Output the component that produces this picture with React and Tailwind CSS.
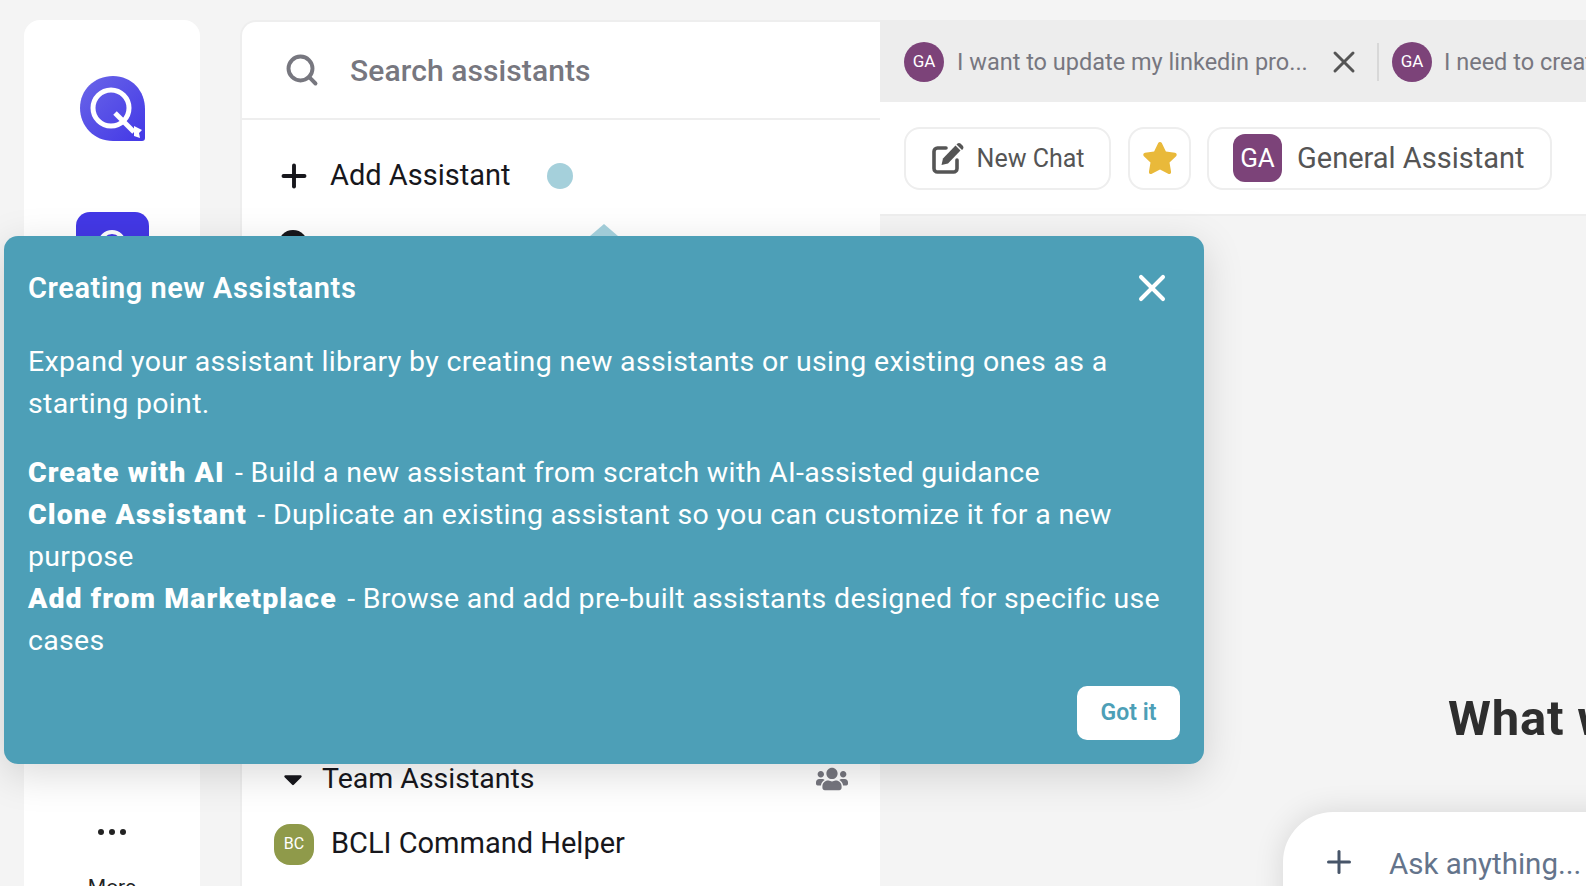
import React from 'react';
import { Plus, Search, X } from 'lucide-react';
import { FaCaretDown, FaStar, FaUsers } from 'react-icons/fa';

const Logo = () => (
  <svg width="66" height="66" viewBox="0 0 66 66">
    <defs>
      <linearGradient id="logoFill" x1="0" y1="0" x2="1" y2="1">
        <stop offset="0" stopColor="#6a66e8" />
        <stop offset="1" stopColor="#4338e6" />
      </linearGradient>
    </defs>
    <path d="M33 0C52 0 65 15 65 33V62Q65 65 62 65H33C14 65 0 50 0 32C0 14 14 0 33 0Z" fill="url(#logoFill)" />
    <circle cx="31" cy="32" r="18" fill="none" stroke="white" strokeWidth="5" />
    <path d="M35 37L54 56" stroke="white" strokeWidth="5" />
    <path d="M54 50L62 54L59 57L60 62L54 60Z" fill="white" />
  </svg>
);

const EditIcon = () => (
  <svg width="33" height="33" viewBox="0 0 33 33" className="shrink-0">
    <path d="M15 6H6.5A3.5 3.5 0 0 0 3 9.5V26.500A3.500 3.500 0 0 0 6.500 30H22.500A3.500 3.500 0 0 0 26 26.500V18" fill="none" stroke="currentColor" strokeWidth="3.600" strokeLinecap="round" />
    <path d="M24.500 3.500L29.500 8.500L17 21.500L10.500 23L12 16.500Z" fill="currentColor" />
    <path d="M26.500 1.500Q28 0.500 29.500 1.500L32 4Q33 5.500 32 7L31 8L25.500 2.500Z" fill="currentColor" />
  </svg>
);

const Avatar = ({ label, className }) => (
  <div className={`flex shrink-0 items-center justify-center text-white ${className}`}>{label}</div>
);

const Sidebar = () => (
  <aside className="ml-6 flex h-[900px] w-[176px] shrink-0 flex-col items-center rounded-2xl bg-white">
    <div className="mt-14 ml-[2px]"><Logo /></div>
    <div className="mt-[70px] flex h-[72px] w-[73px] justify-center rounded-[14px] bg-[#4338e6] pt-[18px]">
      <div className="h-7 w-7 rounded-full border-4 border-white" />
    </div>
    <div className="mt-[545px] flex gap-[5px]">
      <span className="h-[6px] w-[6px] rounded-full bg-[#222]" />
      <span className="h-[6px] w-[6px] rounded-full bg-[#222]" />
      <span className="h-[6px] w-[6px] rounded-full bg-[#222]" />
    </div>
    <div className="mt-[37px] text-[21px] text-[#222]">More</div>
  </aside>
);

const AssistantsPanel = () => (
  <section className="ml-[40px] w-[640px] shrink-0 rounded-tl-2xl border-2 border-b-0 border-r-0 border-[#eeeeee] bg-white">
    <div className="flex h-[98px] items-center border-b-2 border-[#eeeeee] pl-[42px]">
      <Search className="h-[36px] w-[36px] text-[#77777f]" strokeWidth={2.6} />
      <span className="ml-[30px] text-[30px] font-medium tracking-[0.1px] text-[#77777f]">Search assistants</span>
    </div>
    <div className="flex items-center pl-[34px] pt-[34px] text-[#17171c]">
      <Plus className="h-[36px] w-[36px]" strokeWidth={2.6} />
      <span className="ml-[18px] text-[29px]">Add Assistant</span>
      <span className="ml-[37px] h-[26px] w-[26px] rounded-full bg-[#a5d0db]" />
    </div>
    <div className="ml-[36px] mt-[32px] h-[36px] w-[30px] rounded-full bg-[#17171c]" />
    <div className="mt-[492px] flex items-center pl-[38px] pr-[32px] text-[#17171c]">
      <FaCaretDown className="h-[30px] w-[26px]" />
      <span className="ml-[16px] flex-1 text-[28.5px]">Team Assistants</span>
      <FaUsers className="h-[28px] w-[32px] text-[#77777f]" />
    </div>
    <div className="mt-[22px] flex items-center pl-[32px] text-[#17171c]">
      <Avatar label="BC" className="h-[41px] w-[40px] rounded-[16px] bg-[#8f9a4a] text-[16px]" />
      <span className="ml-[17px] text-[29px]">BCLI Command Helper</span>
    </div>
  </section>
);

const ChatPane = () => (
  <main className="min-w-0 flex-1 overflow-hidden">
    <div className="flex h-[82px] items-center whitespace-nowrap bg-[#ededed] pl-6 pt-[2px] text-[23.5px] text-[#777780]">
      <Avatar label="GA" className="h-10 w-10 rounded-full bg-[#7c4379] text-[17px]" />
      <span className="ml-[13px] w-[350px] shrink-0 pt-[2px]">I want to update my linkedin pro...</span>
      <X className="ml-[19px] h-[36px] w-[36px] shrink-0 text-[#555]" strokeWidth={2} />
      <span className="ml-[15px] h-[38px] w-[2px] shrink-0 bg-[#d8d8d8]" />
      <Avatar label="GA" className="ml-[13px] h-10 w-10 rounded-full bg-[#7c4379] text-[17px]" />
      <span className="ml-[12px] pt-[2px]">I need to create a</span>
    </div>
    <div className="flex h-[114px] items-center border-b-2 border-[#eeeeee] bg-white pl-6 text-[#555555]">
      <button className="flex h-[63px] w-[207px] shrink-0 items-center justify-center gap-[13px] rounded-2xl border-2 border-[#eeeeee] text-[25px]">
        <EditIcon />
        <span className="pt-[2px]">New Chat</span>
      </button>
      <button className="ml-[17px] flex h-[63px] w-[63px] shrink-0 items-center justify-center rounded-2xl border-2 border-[#eeeeee]">
        <FaStar className="h-[36px] w-[36px] text-[#e9b93a]" />
      </button>
      <button className="ml-[16px] flex h-[63px] w-[345px] shrink-0 items-center rounded-2xl border-2 border-[#eeeeee] pl-6 text-[29px]">
        <Avatar label="GA" className="h-[48px] w-[49px] rounded-xl bg-[#7c4379] text-[26px]" />
        <span className="ml-[15px] pt-[2px]">General Assistant</span>
      </button>
    </div>
    <h1 className="ml-[568px] mt-[475px] whitespace-nowrap text-[49px] font-bold leading-[56px] tracking-[0.8px] text-[#2e2e2e]">
      What would you like to do?
    </h1>
    <div className="ml-[403px] mt-[65px] flex h-[140px] w-[900px] items-start rounded-[50px] bg-white pl-[38px] pt-[32px] shadow-[0_0_30px_rgba(0,0,0,0.12)]">
      <Plus className="h-[36px] w-[36px] shrink-0 text-[#475569]" strokeWidth={2} />
      <span className="ml-[32px] text-[29.5px] leading-[40px] text-[#64748b]">Ask anything...</span>
    </div>
  </main>
);

const Popover = () => (
  <div className="absolute left-1 top-[236px] h-[528px] w-[1200px] rounded-[14px] bg-[#4d9fb7] px-6 text-[28.5px] leading-[42px] tracking-[0.33px] text-white shadow-[0_10px_40px_rgba(0,0,0,0.15)]">
    <div className="absolute left-[586px] top-[-12px] h-0 w-0 border-x-[14px] border-b-[12px] border-x-transparent border-b-[#a0cbd7]" />
    <div className="flex items-center justify-between pt-[30px]">
      <h2 className="text-[29px] font-semibold leading-[42px] tracking-[0.55px]">Creating new Assistants</h2>
      <X className="mr-[6px] h-[44px] w-[44px]" strokeWidth={2.2} />
    </div>
    <p className="mt-[31px]">
      Expand your assistant library by creating new assistants or using existing ones as a<br />
      starting point.
    </p>
    <p className="mt-[27px]">
      <b className="mr-[3px] font-black tracking-[1.05px]">Create with AI</b> - Build a new assistant from scratch with AI-assisted guidance<br />
      <b className="mr-[3px] font-black tracking-[1.05px]">Clone Assistant</b> - Duplicate an existing assistant so you can customize it for a new<br />
      purpose<br />
      <b className="mr-[3px] font-black tracking-[1.05px]">Add from Marketplace</b> - Browse and add pre-built assistants designed for specific use<br />
      cases
    </p>
    <div className="mt-[24px] flex justify-end">
      <button className="flex h-[54px] w-[103px] items-center justify-center rounded-[10px] bg-white text-[23px] font-semibold tracking-normal text-[#4d9fb7]">
        Got it
      </button>
    </div>
  </div>
);

export default function App() {
  return (
    <div className="relative h-[886px] overflow-hidden bg-[#f4f4f4] pt-5 font-['Roboto',sans-serif]">
      <div className="flex h-[900px]">
        <Sidebar />
        <AssistantsPanel />
        <ChatPane />
      </div>
      <Popover />
    </div>
  );
}
